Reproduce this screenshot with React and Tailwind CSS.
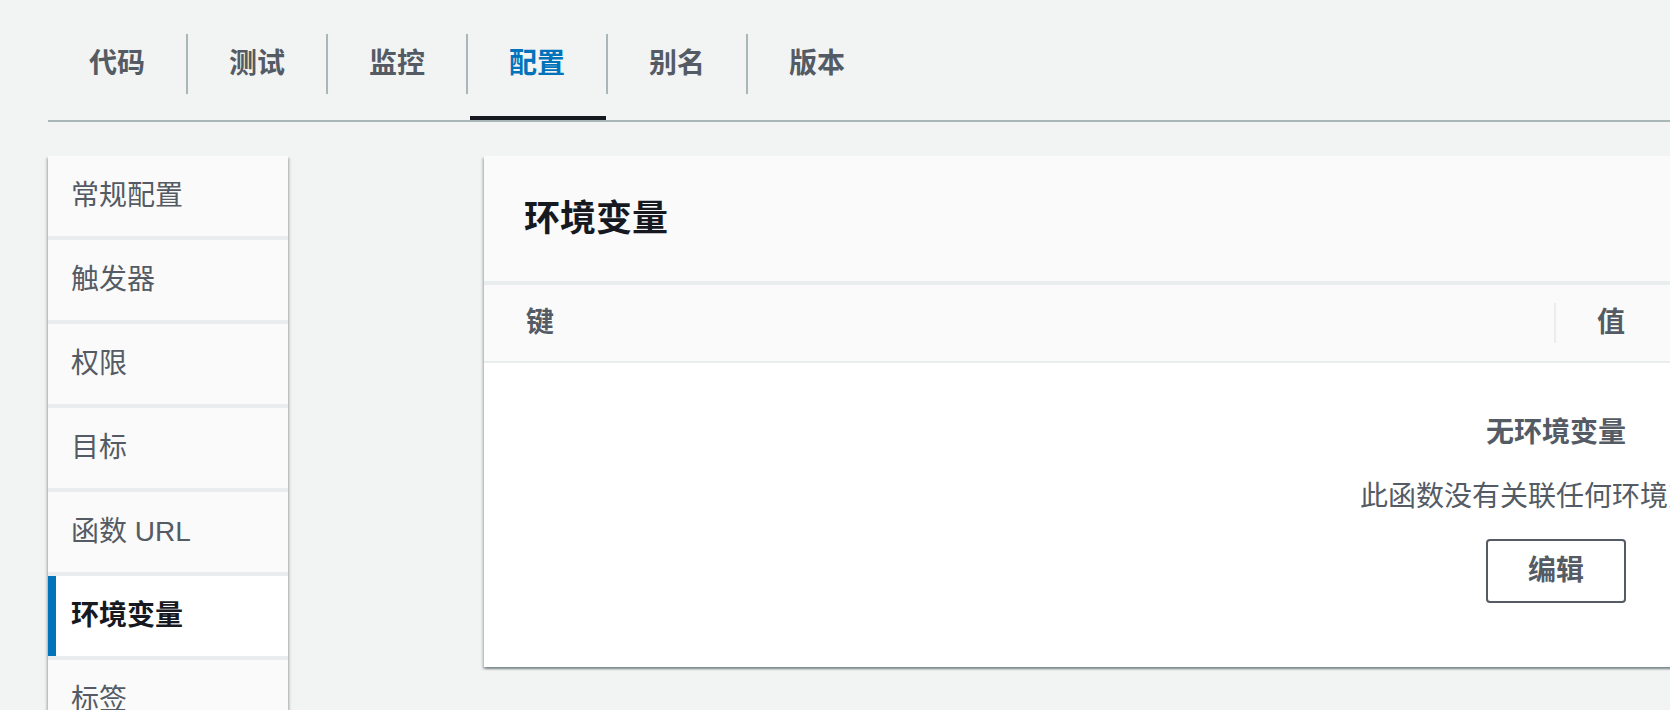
import React from 'react'

const tabs = ['代码', '测试', '监控', '配置', '别名', '版本']
const activeTab = '配置'

const navItems = ['常规配置', '触发器', '权限', '目标', '函数 URL', '环境变量', '标签']
const activeNav = '环境变量'

const cardShadow =
  'shadow-[0_2px_2px_0_rgba(0,28,36,0.3),2px_2px_2px_0_rgba(0,28,36,0.15),-2px_2px_2px_0_rgba(0,28,36,0.15)]'

const App = () => {
  return (
    <div
      className="w-[1670px] h-[710px] overflow-hidden bg-[#f2f3f3] pt-[34px] pl-[48px]"
      style={{ fontFamily: '"Liberation Sans", "Noto Sans CJK SC", sans-serif' }}
    >
      {/* Tabs */}
      <div className="flex w-[1622px] border-b-2 border-[#aab7b8]">
        {tabs.map((tab, i) => (
          <div key={tab} className="flex">
            {i > 0 && <div className="w-[2px] h-[60px] bg-[#aab7b8]"></div>}
            <div className="relative w-[138px] h-[86px]">
              <div
                className={
                  'h-[60px] flex items-center justify-center text-[28px] font-bold ' +
                  (tab === activeTab ? 'text-[#0073bb]' : 'text-[#545b64]')
                }
              >
                {tab}
              </div>
              {tab === activeTab && (
                <div className="absolute left-[2px] right-0 bottom-0 h-[4px] bg-[#16191f]"></div>
              )}
            </div>
          </div>
        ))}
      </div>

      <div className="flex items-start mt-[34px]">
        {/* Side navigation */}
        <div className={'w-[240px] shrink-0 flex flex-col gap-[4px] bg-[#eaeded] ' + cardShadow}>
          {navItems.map(item => {
            const active = item === activeNav
            return (
              <div
                key={item}
                className={
                  'relative h-[80px] flex items-center pl-[23px] text-[28px] whitespace-nowrap ' +
                  (active ? 'bg-white font-bold text-[#16191f]' : 'bg-[#fafafa] text-[#545b64]')
                }
              >
                {active && <div className="absolute left-0 top-0 bottom-0 w-[8px] bg-[#0073bb]"></div>}
                {item}
              </div>
            )
          })}
        </div>

        {/* Environment variables panel */}
        <div className={'ml-[196px] w-[2144px] shrink-0 bg-white ' + cardShadow}>
          <div className="h-[129px] bg-[#fafafa] flex items-center pl-[40px] border-b-4 border-[#eaeded]">
            <h2 className="text-[36px] font-bold text-[#16191f]">环境变量</h2>
          </div>

          <div className="flex h-[78px] bg-[#fafafa] border-b-2 border-[#eaeded]">
            <div className="w-[1070px] flex items-center pl-[42px] text-[28px] font-bold text-[#545b64]">
              键
            </div>
            <div className="flex items-center">
              <div className="w-[2px] h-[40px] bg-[#eaeded]"></div>
              <div className="pl-[41px] text-[28px] font-bold text-[#545b64]">值</div>
            </div>
          </div>

          <div className="flex flex-col items-center pt-[50px] pb-[64px] text-[28px] text-[#545b64]">
            <div className="leading-[40px] font-bold">无环境变量</div>
            <div className="leading-[40px] mt-[24px]">此函数没有关联任何环境变量。</div>
            <button className="mt-[22px] w-[140px] h-[64px] border-2 border-[#545b64] rounded-[4px] bg-white font-bold text-[28px] text-[#545b64]">
              编辑
            </button>
          </div>
        </div>
      </div>
    </div>
  )
}

export default App
